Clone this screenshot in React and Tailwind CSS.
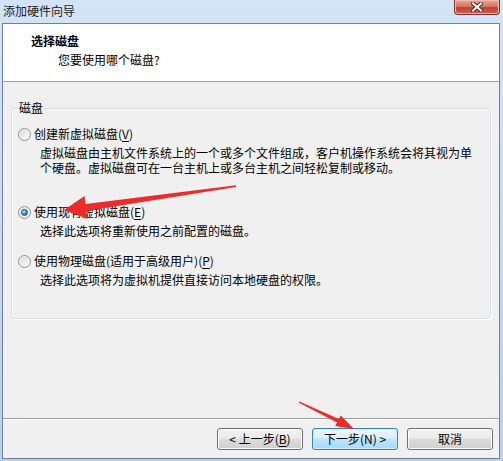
import React from "react";

const font = { fontFamily: '"Noto Sans CJK SC", "Noto Sans", sans-serif' };

const Radio = ({ checked }) => (
  <span className="flex h-[13px] w-[13px] shrink-0 items-center justify-center rounded-full border border-[#8f8f8f] bg-[linear-gradient(135deg,#d6d6d6,#ffffff)] shadow-[inset_0_0_0_1px_#f4f4f4]">
    {checked && (
      <span className="h-[7px] w-[7px] rounded-full border border-[#1a4f86] bg-[radial-gradient(circle_at_35%_30%,#b9e0fb,#3b8fd8_55%,#15508f)]" />
    )}
  </span>
);

const Key = ({ k }) => (
  <>
    (<span className="underline underline-offset-2">{k}</span>)
  </>
);

const Option = ({ checked, label, k, lines, className }) => (
  <div className={className}>
    <div className="flex h-[16px] items-center gap-[3px]">
      <Radio checked={checked} />
      <span className="leading-[16px]">
        {label}
        <Key k={k} />
      </span>
    </div>
    <div className="mt-[3px] pl-[22px] leading-[15px]">
      {lines.map((l) => (
        <div key={l} className="whitespace-nowrap">
          {l}
        </div>
      ))}
    </div>
  </div>
);

const Button = ({ children, focused }) => (
  <button
    className={`h-[22px] w-[86px] rounded-[3px] border text-[12px] leading-[18px] text-black ${
      focused
        ? "border-[#3c7fb1] bg-[linear-gradient(#eaf6fd_0%,#d9f0fc_45%,#bee6fd_50%,#a7d9f5_100%)] shadow-[inset_0_0_0_1px_#cdeeff]"
        : "border-[#707070] bg-[linear-gradient(#f2f2f2_0%,#ebebeb_45%,#dddddd_50%,#cfcfcf_100%)] shadow-[inset_0_0_0_1px_#fcfcfc]"
    }`}
  >
    {children}
  </button>
);

export default function App() {
  return (
    <div
      className="relative flex h-[461px] w-[503px] flex-col overflow-hidden bg-gradient-to-b from-[#d3e4f7] to-[#b9d1ec] text-[12px] text-black"
      style={font}
    >
      {/* title bar */}
      <div className="flex h-[23px] shrink-0 items-start justify-between">
        <span className="pl-[3px] pt-[3px] text-[12px] leading-[16px] text-[#1b1b1b]">
          添加硬件向导
        </span>
        <div className="mr-[3px] flex h-[15px] w-[46px] items-center justify-center rounded-b-[4px] border border-t-0 border-[#7e3128] bg-[linear-gradient(#e6a799_0%,#d97766_45%,#c4402f_55%,#d0604e_100%)] shadow-[inset_0_0_0_1px_#eeb8ad]">
          <svg width="12" height="10" viewBox="0 0 12 10">
            <path d="M2 1.5 L10 8.5 M10 1.5 L2 8.5" stroke="#5a2620" strokeWidth="4" strokeLinecap="square" />
            <path d="M2 1.5 L10 8.5 M10 1.5 L2 8.5" stroke="#ffffff" strokeWidth="2" strokeLinecap="square" />
          </svg>
        </div>
      </div>

      {/* wizard panel */}
      <div className="ml-[2px] flex h-[436px] w-[498px] shrink-0 flex-col border border-[#6f8196] bg-[#f0f0f0]">
        <div className="h-[58px] shrink-0 border-b border-[#a0a0a0] bg-white pl-[28px] pt-[9px]">
          <div className="font-bold leading-[16px]">选择磁盘</div>
          <div className="mt-[3px] pl-[27px] leading-[16px]">您要使用哪个磁盘?</div>
        </div>

        <div className="flex flex-1 flex-col">
          <div className="px-[8px] pt-[18px]">
            <fieldset className="rounded-[3px] border border-[#d5dfe5] pb-[31px] pl-[6px] pt-[10px] shadow-[inset_1px_1px_0_#ffffff,1px_1px_0_#ffffff]">
              <legend className="px-[1px] leading-[16px]">磁盘</legend>
              <Option
                label="创建新虚拟磁盘"
                k="V"
                lines={[
                  "虚拟磁盘由主机文件系统上的一个或多个文件组成，客户机操作系统会将其视为单",
                  "个硬盘。虚拟磁盘可在一台主机上或多台主机之间轻松复制或移动。",
                ]}
              />
              <Option
                checked
                className="mt-[29px]"
                label="使用现有虚拟磁盘"
                k="E"
                lines={["选择此选项将重新使用之前配置的磁盘。"]}
              />
              <Option
                className="mt-[15px]"
                label="使用物理磁盘(适用于高级用户)"
                k="P"
                lines={["选择此选项将为虚拟机提供直接访问本地硬盘的权限。"]}
              />
            </fieldset>
          </div>

          <div className="mt-auto border-t border-[#a0a0a0] shadow-[inset_0_1px_0_#ffffff]">
            <div className="flex justify-end gap-[9px] pb-[8px] pr-[6px] pt-[9px]">
              <Button>
                &lt; 上一步(<span className="underline underline-offset-2">B</span>)
              </Button>
              <Button focused>下一步(N) &gt;</Button>
              <Button>取消</Button>
            </div>
          </div>
        </div>
      </div>

      {/* red annotation arrows */}
      <svg
        className="pointer-events-none absolute left-0 top-0"
        width="503"
        height="461"
        viewBox="0 0 503 461"
      >
        <polygon
          points="64,210 84.5,196 85.6,204 236,185.3 236,187 86.4,211 87.5,219"
          fill="#ee2b2b"
        />
        <polygon
          points="354,429 335.2,426 337.1,422.5 298.6,402.6 299.4,401.4 338.9,418.9 340.8,415.4"
          fill="#ee2b2b"
        />
      </svg>
    </div>
  );
}
